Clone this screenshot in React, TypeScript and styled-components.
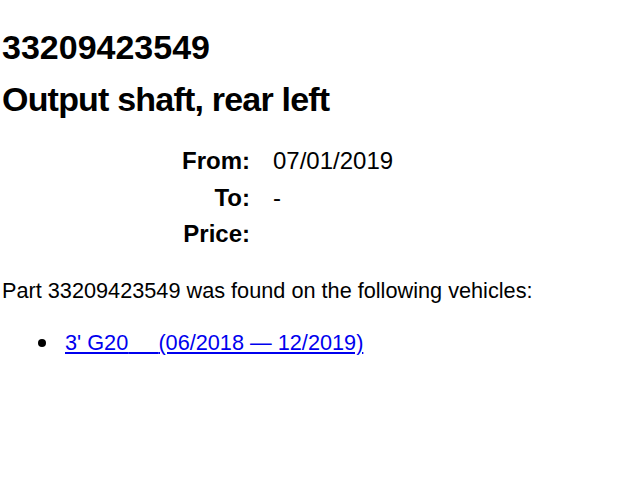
import React from "react";
import styled, { createGlobalStyle } from "styled-components";

const GlobalStyle = createGlobalStyle`
  body {
    margin: 0;
    background: #fff;
    color: #000;
    font-family: "Liberation Sans", Arial, Helvetica, sans-serif;
  }
`;

const rows = [
  { label: "From:", value: "07/01/2019" },
  { label: "To:", value: "-" },
  { label: "Price:", value: "" },
];

const vehicles = [{ model: "3' G20", period: "(06/2018 — 12/2019)" }];

export default function App() {
  return (
    <>
      <GlobalStyle />
      <Page>
        <PartNumber>33209423549</PartNumber>
        <PartName>Output shaft, rear left</PartName>
        <Details>
          {rows.map((row) => (
            <React.Fragment key={row.label}>
              <Label>{row.label}</Label>
              <Value>{row.value}</Value>
            </React.Fragment>
          ))}
        </Details>
        <Intro>Part 33209423549 was found on the following vehicles:</Intro>
        <VehicleList>
          {vehicles.map((v) => (
            <VehicleItem key={v.model}>
              <Bullet />
              <VehicleLink href="#">
                {v.model}
                {"\u00a0\u00a0\u00a0\u00a0\u00a0"}
                {v.period}
              </VehicleLink>
            </VehicleItem>
          ))}
        </VehicleList>
      </Page>
    </>
  );
}

const Page = styled.div`
  padding: 0 2px;
`;

const PartNumber = styled.h1`
  font-size: 34px;
  font-weight: bold;
  margin: 28px 0 0;
`;

const PartName = styled.h2`
  font-size: 34px;
  font-weight: bold;
  letter-spacing: -0.8px;
  margin: 13px 0 0;
`;

const Details = styled.div`
  display: grid;
  grid-template-columns: 90px auto;
  column-gap: 23px;
  row-gap: 8.5px;
  margin: 28px 0 0 158px;
  font-size: 24px;
`;

const Label = styled.div`
  text-align: right;
  font-weight: bold;
`;

const Value = styled.div`
  min-height: 27px;
`;

const Intro = styled.p`
  font-size: 21.7px;
  margin: 30px 0 0;
`;

const VehicleList = styled.ul`
  list-style: none;
  font-size: 21.7px;
  margin: 26px 0 0;
  padding-left: 36px;
`;

const VehicleItem = styled.li`
  display: flex;
  align-items: center;
  gap: 19px;
`;

const Bullet = styled.span`
  width: 8px;
  height: 8px;
  border-radius: 50%;
  background: #000;
  flex-shrink: 0;
`;

const VehicleLink = styled.a`
  color: #0000ee;
  text-decoration: underline;
`;
